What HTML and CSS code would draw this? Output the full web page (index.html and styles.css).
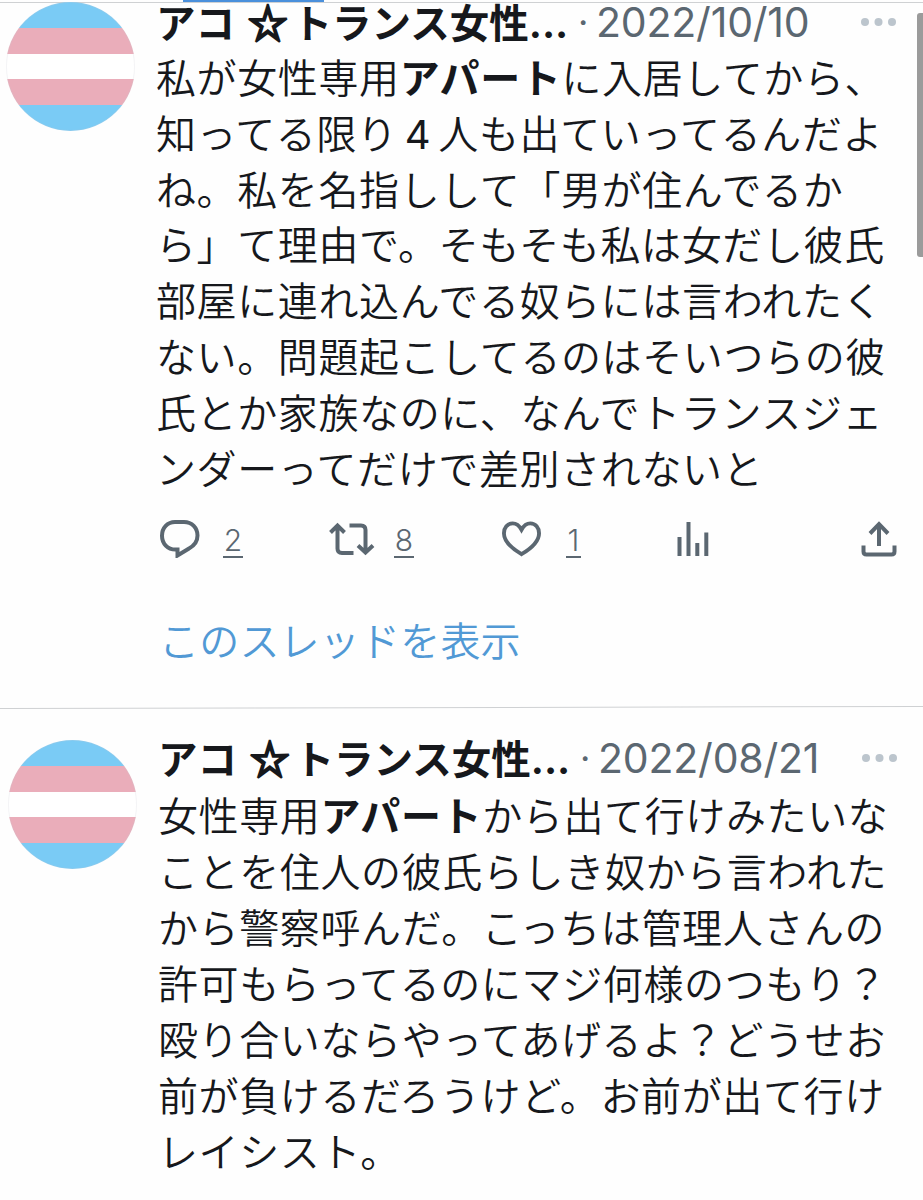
FILE: index.html
```html
<!DOCTYPE html>
<html lang="ja">
<head>
    <meta charset="UTF-8">
    <meta name="viewport" content="width=device-width, initial-scale=1.0">
    <title>アコ ☆トランス女性</title>
    <link rel="stylesheet" href="styles.css">
</head>
<body>
    <div class="timeline">
        <div class="tab-indicator"></div>
        <div class="scrollbar"></div>

        <article class="tweet first">
            <div class="avatar"></div>
            <div class="main">
                <div class="header">
                    <span class="name">アコ <span class="star">☆</span>トランス女性<span class="ellipsis">...</span></span>
                    <span class="dot">·</span>
                    <span class="date">2022/10/10</span>
                    <svg class="more" viewBox="0 0 36 8"><circle cx="4" cy="4" r="4"/><circle cx="17.5" cy="4" r="4"/><circle cx="31" cy="4" r="4"/></svg>
                </div>
                <p class="text">私が女性専用<b>アパート</b>に入居してから、<br>知ってる限り<span class="digit">4</span>人も出ていってるんだよ<br>ね。私を名指しして「男が住んでるか<br>ら」て理由で。そもそも私は女だし彼氏<br>部屋に連れ込んでる奴らには言われたく<br>ない。問題起こしてるのはそいつらの彼<br>氏とか家族なのに、なんでトランスジェ<br>ンダーってだけで差別されないと</p>
                <div class="actions">
                    <div class="action reply">
                        <svg width="40" height="38" viewBox="0 0 40 38"><path d="M15 2h9C32 2 37.500 8 37.500 15.500c0 6-3 10-8.500 13L17.500 35.500V29.500H15.500C7.500 29.500 2 23.500 2 15.700 2 8 7.500 2 15 2z"/></svg>
                        <span>2</span>
                    </div>
                    <div class="action retweet">
                        <svg width="46" height="34" viewBox="0 0 46 34"><path d="M1.500 10.500l7-7 7 7M8.500 4v22.500q0 4.500 4.500 4.500H24.500M20.500 3.500h11.500q4.500 0 4.500 4.500v22M29 23.500l7.500 7 7.500-7"/></svg>
                        <span>8</span>
                    </div>
                    <div class="action like">
                        <svg width="39" height="36" viewBox="0 0 40 36"><path d="M20 8.500C17.500 4 14.500 2 11 2 5.500 2 2 6.500 2 12c0 8 7 15 18 21.500C31 27 38 20 38 12c0-5.500-3.500-10-9-10-3.500 0-6.500 2-9 6.500z"/></svg>
                        <span>1</span>
                    </div>
                    <div class="action stats">
                        <svg width="32" height="36" viewBox="0 0 32 36"><path d="M2.500 16v19M11.500 1v34M20.300 22v13M29.300 11.500v23.500"/></svg>
                    </div>
                    <div class="action share">
                        <svg width="36" height="36" viewBox="0 0 36 36"><path d="M2.500 24.500v6q0 3 3 3h25q3 0 3-3v-6M18 25V3M9 12.500L18 3.200l9 9.300"/></svg>
                    </div>
                </div>
                <a class="thread">このスレッドを表示</a>
            </div>
        </article>

        <article class="tweet second">
            <div class="avatar"></div>
            <div class="main">
                <div class="header">
                    <span class="name">アコ <span class="star">☆</span>トランス女性<span class="ellipsis">...</span></span>
                    <span class="dot">·</span>
                    <span class="date">2022/08/21</span>
                    <svg class="more" viewBox="0 0 36 8"><circle cx="4" cy="4" r="4"/><circle cx="17.5" cy="4" r="4"/><circle cx="31" cy="4" r="4"/></svg>
                </div>
                <p class="text">女性専用<b>アパート</b>から出て行けみたいな<br>ことを住人の彼氏らしき奴から言われた<br>から警察呼んだ。こっちは管理人さんの<br>許可もらってるのにマジ何様のつもり？<br>殴り合いならやってあげるよ？どうせお<br>前が負けるだろうけど。お前が出て行け<br>レイシスト。</p>
            </div>
        </article>
    </div>
</body>
</html>
```
FILE: styles.css
```css
* {
    margin: 0;
    padding: 0;
    box-sizing: border-box;
}

body {
    font-family: "Noto Sans CJK JP", sans-serif;
    color: #16181c;
    background: #fefefe;
}

.timeline {
    position: relative;
    height: 1200px;
}

.timeline::before {
    content: "";
    position: absolute;
    top: 2px;
    left: 0;
    width: 100%;
    height: 1px;
    background: #cfd1d3;
}

.tab-indicator {
    position: absolute;
    top: 0;
    left: 183px;
    width: 141px;
    height: 2px;
    background: #4a90dc;
}

.scrollbar {
    position: absolute;
    top: 13px;
    right: 0;
    width: 6px;
    height: 244px;
    border-radius: 3px 0 0 3px;
    background: #9b9b9b;
}

.tweet {
    position: relative;
    display: flex;
    gap: 21px;
    padding-left: 6px;
}

.first {
    height: 708px;
    padding-top: 2px;
}

/* separator, very slightly tilted */
.first::after {
    content: "";
    position: absolute;
    left: 0;
    bottom: 0;
    width: 100%;
    height: 1px;
    background: #cfd1d3;
    transform: rotate(-0.12deg);
}

.second {
    padding: 32px 0 0 8px;
}

.avatar {
    flex: none;
    width: 129px;
    height: 129px;
    border-radius: 50%;
    border: 1px solid rgba(200, 200, 210, 0.2);
    background: linear-gradient(#7acbf5 20%, #eaadba 20% 40%, #fff 40% 60%, #eaadba 60% 80%, #7acbf5 80%) border-box;
}

.main {
    flex: 1;
}

.header {
    display: flex;
    align-items: center;
    height: 44px;
    margin: -2px 26px 5px 0;
    line-height: 44px;
    white-space: nowrap;
}

.second .header {
    margin: -4px 25px 6px 0;
}

.name {
    width: 417px;
    font-size: 39.5px;
    font-weight: 700;
}

.star {
    margin: 0 5px 0 4px;
    -webkit-text-stroke: 2.2px #16181c;
}

.ellipsis {
    font-family: Inter, sans-serif;
}

.dot {
    width: 23px;
    padding-left: 5px;
    color: #5b6771;
    font: 36px/44px Inter, sans-serif;
}

.date {
    color: #5b6771;
    font: 41px/44px Inter, sans-serif;
    letter-spacing: -0.2px;
}

.more {
    width: 36px;
    height: 8px;
    margin-left: auto;
    fill: #bcc5cd;
}

.text {
    font-size: 40px;
    font-weight: 350;
    line-height: 55.8px;
    letter-spacing: 0.62px;
    white-space: nowrap;
}

.second .text {
    line-height: 56px;
}

.digit {
    display: inline-block;
    width: 40.62px;
    font-family: Inter, sans-serif;
    font-weight: 400;
    text-align: center;
    line-height: 1;
}

.actions {
    display: grid;
    grid-template-columns: 169px 173px 175px 185px auto;
    align-items: center;
    height: 44px;
    margin-top: 22px;
    padding-left: 4px;
}

.action {
    display: flex;
    align-items: center;
}

.action svg {
    fill: none;
    stroke: #5b6771;
    stroke-width: 4;
}

.action span {
    min-width: 20px;
    margin: 4px 0 0 23px;
    border-bottom: 2px solid #5b6771;
    color: #5b6771;
    text-align: center;
    font: 300 30px/31px Inter, sans-serif;
}

.retweet span {
    margin-left: 19px;
}

.like span {
    min-width: 15px;
    margin-left: 25px;
}

.share {
    margin-left: -1px;
}

.thread {
    display: block;
    margin-top: 56px;
    padding-left: 3px;
    color: #5199d5;
    font-size: 40px;
    font-weight: 350;
    line-height: 44px;
    letter-spacing: 0.2px;
}
```
